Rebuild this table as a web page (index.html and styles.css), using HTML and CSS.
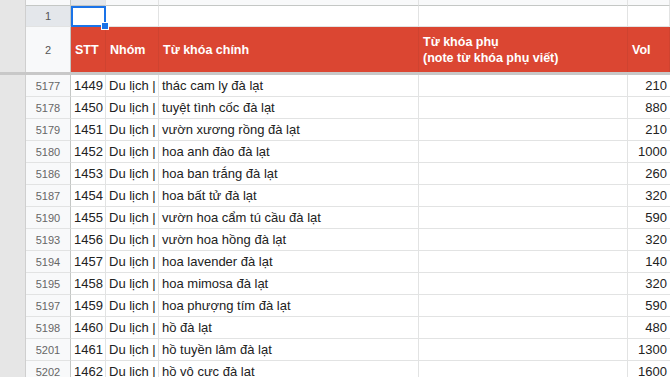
FILE: index.html
```html
<!DOCTYPE html>
<html lang="vi">
<head>
<meta charset="utf-8">
<title>Sheet</title>
<link rel="stylesheet" href="styles.css">
</head>
<body>
<div class="sheet">
  <div class="row colhead">
    <div class="side"></div><div class="rh"></div><div class="c sel-col"></div><div class="c"></div><div class="c"></div><div class="c"></div><div class="c"></div>
  </div>
  <div class="row r1">
    <div class="side"></div><div class="rh sel-row">1</div><div class="c active"><span class="handle"></span></div><div class="c"></div><div class="c"></div><div class="c"></div><div class="c"></div>
  </div>
  <div class="row r2">
    <div class="side"></div><div class="rh">2</div>
    <div class="h">STT</div><div class="h">Nhóm</div><div class="h">Từ khóa chính</div><div class="h two">Từ khóa phụ<br>(note từ khóa phụ viết)</div><div class="h">Vol</div>
  </div>
  <div class="row freeze"><div class="side"></div><div class="fz"></div></div>

  <div class="row d"><div class="side"></div><div class="rh">5177</div><div class="c">1449</div><div class="c">Du lịch |</div><div class="c">thác cam ly đà lạt</div><div class="c"></div><div class="c num">210</div></div>
  <div class="row d"><div class="side"></div><div class="rh">5178</div><div class="c">1450</div><div class="c">Du lịch |</div><div class="c">tuyệt tình cốc đà lạt</div><div class="c"></div><div class="c num">880</div></div>
  <div class="row d"><div class="side"></div><div class="rh">5179</div><div class="c">1451</div><div class="c">Du lịch |</div><div class="c">vườn xương rồng đà lạt</div><div class="c"></div><div class="c num">210</div></div>
  <div class="row d"><div class="side"></div><div class="rh">5180</div><div class="c">1452</div><div class="c">Du lịch |</div><div class="c">hoa anh đào đà lạt</div><div class="c"></div><div class="c num">1000</div></div>
  <div class="row d"><div class="side"></div><div class="rh">5186</div><div class="c">1453</div><div class="c">Du lịch |</div><div class="c">hoa ban trắng đà lạt</div><div class="c"></div><div class="c num">260</div></div>
  <div class="row d"><div class="side"></div><div class="rh">5187</div><div class="c">1454</div><div class="c">Du lịch |</div><div class="c">hoa bất tử đà lạt</div><div class="c"></div><div class="c num">320</div></div>
  <div class="row d"><div class="side"></div><div class="rh">5190</div><div class="c">1455</div><div class="c">Du lịch |</div><div class="c">vườn hoa cẩm tú cầu đà lạt</div><div class="c"></div><div class="c num">590</div></div>
  <div class="row d"><div class="side"></div><div class="rh">5193</div><div class="c">1456</div><div class="c">Du lịch |</div><div class="c">vườn hoa hồng đà lạt</div><div class="c"></div><div class="c num">320</div></div>
  <div class="row d"><div class="side"></div><div class="rh">5194</div><div class="c">1457</div><div class="c">Du lịch |</div><div class="c">hoa lavender đà lạt</div><div class="c"></div><div class="c num">140</div></div>
  <div class="row d"><div class="side"></div><div class="rh">5195</div><div class="c">1458</div><div class="c">Du lịch |</div><div class="c">hoa mimosa đà lạt</div><div class="c"></div><div class="c num">320</div></div>
  <div class="row d"><div class="side"></div><div class="rh">5197</div><div class="c">1459</div><div class="c">Du lịch |</div><div class="c">hoa phượng tím đà lạt</div><div class="c"></div><div class="c num">590</div></div>
  <div class="row d"><div class="side"></div><div class="rh">5198</div><div class="c">1460</div><div class="c">Du lịch |</div><div class="c">hồ đà lạt</div><div class="c"></div><div class="c num">480</div></div>
  <div class="row d"><div class="side"></div><div class="rh">5201</div><div class="c">1461</div><div class="c">Du lịch |</div><div class="c">hồ tuyền lâm đà lạt</div><div class="c"></div><div class="c num">1300</div></div>
  <div class="row d"><div class="side"></div><div class="rh">5202</div><div class="c">1462</div><div class="c">Du lịch |</div><div class="c">hồ vô cực đà lạt</div><div class="c"></div><div class="c num">1600</div></div>
</div>
</body>
</html>
```

FILE: styles.css
```css
html, body {
  margin: 0;
  padding: 0;
  background: #ffffff;
  overflow: hidden;
}
body {
  width: 670px;
  height: 377px;
  font-family: "Liberation Sans", Arial, sans-serif;
  color: #222222;
}
.sheet {
  width: 670px;
  overflow: hidden;
}
.row {
  display: grid;
  grid-template-columns: 26px 45px 35px 53px 260px 209px 42px;
  box-sizing: border-box;
}
.side {
  background: #e6e6e6;
  border-right: 1px solid #cfcfcf;
}
.rh {
  background: #f8f9fa;
  border-right: 1px solid #c4c7c5;
  border-bottom: 1px solid #e2e3e3;
  color: #666666;
  font-size: 11px;
  display: flex;
  align-items: center;
  justify-content: center;
  box-sizing: border-box;
}
.c {
  border-right: 1px solid #e2e3e3;
  border-bottom: 1px solid #e2e3e3;
  box-sizing: border-box;
  font-size: 13px;
  white-space: nowrap;
  overflow: hidden;
  padding: 0 3px;
  position: relative;
}

/* column header strip */
.colhead { height: 6px; }
.colhead .rh, .colhead .c {
  background: #f8f9fa;
  border-bottom: 1px solid #c4c7c5;
}
.colhead .c.sel-col { background: #e4e7eb; }

/* row 1 */
.r1 { height: 21px; }
.r1 .rh.sel-row { background: #e4e7eb; color: #555555; }
.r1 .c { overflow: visible; }
.active {
  outline: 2px solid #1a73e8;
  outline-offset: -2px;
  z-index: 2;
}
.handle {
  position: absolute;
  right: -4px;
  bottom: -4px;
  width: 6px;
  height: 6px;
  background: #1a73e8;
  border: 1px solid #ffffff;
  box-sizing: content-box;
}

/* header row */
.r2 { height: 45px; }
.r2 .rh { border-bottom: none; color: #555555; font-size: 11px; }
.h {
  background: #db4632;
  color: #ffffff;
  font-weight: bold;
  font-size: 12.5px;
  line-height: 16px;
  display: flex;
  align-items: center;
  padding: 0 4px;
  white-space: nowrap;
  overflow: hidden;
  border-right: 1px solid #cf4330;
  box-sizing: border-box;
}

/* frozen line */
.freeze { height: 3px; grid-template-columns: 26px 1fr; }
.freeze .side { background: #c8c8c8; border-right: none; }
.fz { background: #c8c8c8; }

/* data rows */
.d { height: 22px; }
.d .c {
  display: flex;
  align-items: flex-end;
  line-height: 16px;
  padding-bottom: 2px;
}
.d .rh {
  align-items: flex-end;
  padding-bottom: 4px;
  line-height: 12px;
}
.d .c.num {
  justify-content: flex-end;
  padding-right: 3px;
  overflow: visible;
  border-right: none;
}
```
